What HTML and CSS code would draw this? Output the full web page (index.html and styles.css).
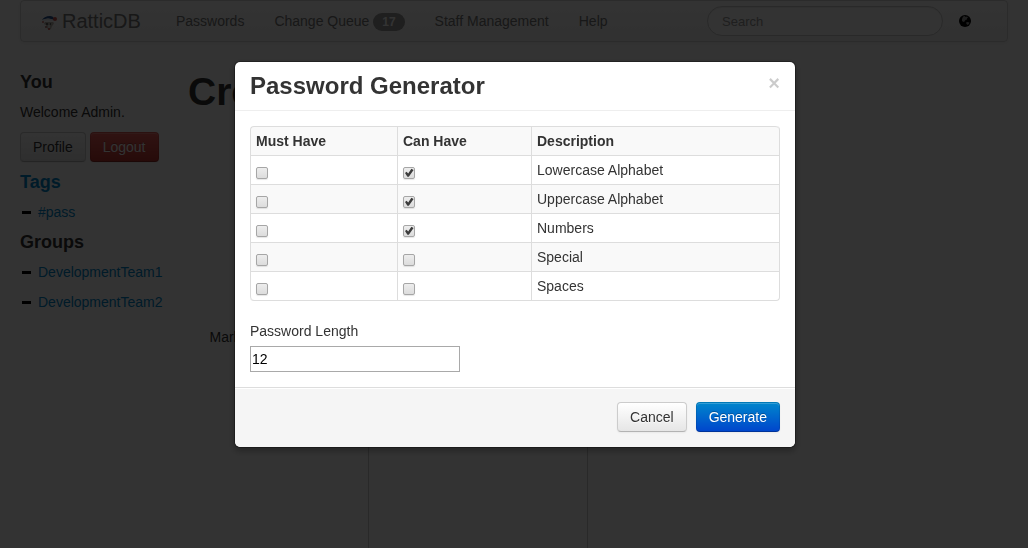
FILE: index.html
```html
<!DOCTYPE html>
<html lang="en">
<head>
<meta charset="utf-8">
<meta name="viewport" content="width=device-width, initial-scale=1">
<title>RatticDB</title>
<link rel="stylesheet" href="styles.css">
</head>
<body>
<div class="page">
  <nav class="navbar">
    <a class="brand" href="#">
      <svg class="logo" viewBox="0 0 16 16" aria-hidden="true">
        <path d="M4 7h8l1 1-1 2-1 1-1 3-2 1-2-2-1-3-2-1z" fill="#b9b2a9"/>
        <path d="M5 8h2v2H5zM9 8h1v2H9z" fill="#666"/>
        <path d="M7 10h2v3H7z" fill="#ddd"/>
        <path d="M1 5c1-2 4-4 8-4 2 0 4 1 4 3v1C9 3 5 3 1 5z" fill="#26508f"/>
        <path d="M1 5c4-2 8-2 12 0v1C9 5 5 5 2 6z" fill="#e4e9f0"/>
        <circle cx="14" cy="4" r="2" fill="#c9504a"/>
        <circle cx="2" cy="7" r="1" fill="#c9706a"/>
        <circle cx="8" cy="14" r="1" fill="#c9504a"/>
        <circle cx="5" cy="12" r="1" fill="#a56a64"/>
      </svg>
      <span>RatticDB</span>
    </a>
    <ul class="nav">
      <li><a href="#">Passwords</a></li>
      <li><a href="#">Change Queue <span class="badge">17</span></a></li>
      <li><a href="#">Staff Management</a></li>
      <li><a href="#">Help</a></li>
    </ul>
    <input class="search" type="search" placeholder="Search" aria-label="Search">
    <a class="globe" href="#" aria-label="Language">
      <svg viewBox="0 0 14 14" aria-hidden="true">
        <circle cx="7" cy="7" r="6" fill="#000"/>
        <path d="M5 2.500 7 2 7.500 3 9 2.500 10 3.500 9 4.500 9 5.500 7.500 6 6.500 7.500 5.500 8 4 7 4 5z" fill="#999"/>
        <path d="M8 8.500 9.500 8 11.500 8.500 11 10 9.500 11 8.500 10z" fill="#999"/>
      </svg>
    </a>
  </nav>
  <div class="columns">
    <aside class="sidebar">
      <h4>You</h4>
      <p>Welcome Admin.</p>
      <div class="account">
        <button class="btn" type="button">Profile</button>
        <button class="btn danger" type="button">Logout</button>
      </div>
      <h4><a href="#">Tags</a></h4>
      <ul class="list">
        <li><span class="minus"></span><a href="#">#pass</a></li>
      </ul>
      <h4>Groups</h4>
      <ul class="list">
        <li><span class="minus"></span><a href="#">DevelopmentTeam1</a></li>
        <li><span class="minus"></span><a href="#">DevelopmentTeam2</a></li>
      </ul>
    </aside>
    <main class="content">
      <h1>Create</h1>
      <div class="field">
        <label for="notes">Markdown Description</label>
        <textarea id="notes"></textarea>
      </div>
    </main>
  </div>
</div>
<div class="backdrop"></div>
<form class="modal" role="dialog" aria-labelledby="modal-title">
  <header class="modal-header">
    <h3 id="modal-title">Password Generator</h3>
    <button class="close" type="button" aria-label="Close">×</button>
  </header>
  <div class="modal-body">
    <table class="rules">
      <colgroup><col class="must"><col class="can"><col></colgroup>
      <thead>
        <tr><th>Must Have</th><th>Can Have</th><th>Description</th></tr>
      </thead>
      <tbody>
        <tr><td><input type="checkbox" aria-label="Must have lowercase alphabet"></td><td><input type="checkbox" aria-label="Can have lowercase alphabet" checked></td><td>Lowercase Alphabet</td></tr>
        <tr><td><input type="checkbox" aria-label="Must have uppercase alphabet"></td><td><input type="checkbox" aria-label="Can have uppercase alphabet" checked></td><td>Uppercase Alphabet</td></tr>
        <tr><td><input type="checkbox" aria-label="Must have numbers"></td><td><input type="checkbox" aria-label="Can have numbers" checked></td><td>Numbers</td></tr>
        <tr><td><input type="checkbox" aria-label="Must have special"></td><td><input type="checkbox" aria-label="Can have special"></td><td>Special</td></tr>
        <tr><td><input type="checkbox" aria-label="Must have spaces"></td><td><input type="checkbox" aria-label="Can have spaces"></td><td>Spaces</td></tr>
      </tbody>
    </table>
    <label class="length-label" for="length">Password Length</label>
    <input class="length" id="length" type="text" value="12">
  </div>
  <footer class="modal-footer">
    <button class="btn" type="button">Cancel</button>
    <button class="btn primary" type="button">Generate</button>
  </footer>
</form>
</body>
</html>
```
FILE: styles.css
```css
* { box-sizing: border-box; }

body {
  margin: 0;
  overflow: hidden;
  background: #fff;
  color: #333;
  font: 14px/20px "Liberation Sans", Arial, sans-serif;
}

h1, h3, h4, p, ul { margin: 0; padding: 0; }
ul { list-style: none; }
a { color: #08c; text-decoration: none; }
button, input, textarea { font-family: inherit; }

.page {
  height: 100vh;
  padding: 0 20px;
  overflow: hidden;
}

.navbar {
  display: flex;
  align-items: center;
  padding: 0 20px;
  border: 1px solid #d4d4d4;
  border-radius: 4px;
  background: linear-gradient(#fff, #f2f2f2);
  box-shadow: 0 1px 4px rgba(0, 0, 0, 0.07);
}

.brand {
  display: flex;
  align-items: center;
  gap: 5px;
  padding: 10px 20px 10px 0;
  color: #777;
  font-size: 20px;
}

.logo { width: 16px; height: 16px; margin-top: 3px; }

.nav { display: flex; flex: 1; }
.nav a { display: block; padding: 10px 15px; color: #777; }

.badge {
  display: inline-block;
  padding: 2px 9px;
  border-radius: 9px;
  background: #999;
  color: #fff;
  font-size: 12px;
  font-weight: bold;
  line-height: 14px;
  vertical-align: baseline;
}

.search {
  appearance: none;
  width: 236px;
  height: 30px;
  padding: 4px 14px;
  border: 1px solid #ccc;
  border-radius: 15px;
  background: #fff;
  font-size: 13px;
  box-shadow: inset 0 1px 1px rgba(0, 0, 0, 0.08);
}
.search::placeholder { color: #999; }

.globe { display: flex; padding: 0 15px; }
.globe svg { width: 14px; height: 14px; }

.columns {
  display: grid;
  grid-template-columns: 148px 1fr;
  gap: 20px;
  padding-top: 30px;
}

.sidebar, .list { display: flex; flex-direction: column; gap: 10px; }

h4 { color: #333; font-size: 18px; line-height: 20px; }

.account { display: flex; gap: 4px; }

.list li { display: flex; align-items: center; gap: 7px; padding-left: 2px; }
.minus { width: 9px; height: 3px; background: #000; }

h1 { font-size: 39px; line-height: 40px; }

.field {
  display: grid;
  grid-template-columns: 160px 220px;
  gap: 20px;
  margin-top: 210px;
}
.field label { padding-top: 5px; text-align: right; }
.field textarea { height: 320px; border: 1px solid #ccc; resize: none; }

.btn {
  padding: 4px 12px;
  border: 1px solid #ccc;
  border-bottom-color: #b3b3b3;
  border-radius: 4px;
  background: linear-gradient(#fff, #e6e6e6);
  box-shadow: inset 0 1px 0 rgba(255, 255, 255, 0.2), 0 1px 2px rgba(0, 0, 0, 0.05);
  color: #333;
  font-size: 14px;
  line-height: 20px;
  text-shadow: 0 1px 1px rgba(255, 255, 255, 0.75);
}

.danger, .primary {
  border-color: rgba(0, 0, 0, 0.1) rgba(0, 0, 0, 0.1) rgba(0, 0, 0, 0.25);
  background-origin: border-box;
  color: #fff;
  text-shadow: 0 -1px 0 rgba(0, 0, 0, 0.25);
}
.danger { background-image: linear-gradient(#ee5f5b, #bd362f); }
.primary { background-image: linear-gradient(#08c, #04c); }

.backdrop {
  position: fixed;
  inset: 0;
  background: #000;
  opacity: 0.8;
}

.modal {
  position: fixed;
  top: 61px;
  left: 50%;
  width: 562px;
  margin-left: -280px;
  border: 1px solid rgba(0, 0, 0, 0.3);
  border-radius: 6px;
  background: #fff;
  background-clip: padding-box;
  box-shadow: 0 3px 7px rgba(0, 0, 0, 0.3);
}

.modal-header {
  display: flex;
  justify-content: space-between;
  align-items: flex-start;
  padding: 9px 15px;
  border-bottom: 1px solid #eee;
}
.modal-header h3 { font-size: 24px; line-height: 30px; }

.close {
  padding: 0;
  margin-top: 2px;
  border: 0;
  background: none;
  color: #000;
  font-size: 20px;
  font-weight: bold;
  line-height: 20px;
  opacity: 0.2;
}

.modal-body { padding: 15px; }

.rules {
  width: 100%;
  table-layout: fixed;
  margin-bottom: 20px;
  border: 1px solid #ddd;
  border-width: 0 1px 1px 0;
  border-radius: 4px;
  border-spacing: 0;
}
.must { width: 147px; }
.can { width: 134px; }
.rules th, .rules td {
  padding: 4px 5px;
  border: 1px solid #ddd;
  border-width: 1px 0 0 1px;
  text-align: left;
  vertical-align: top;
}
.rules thead th, .rules tbody tr:nth-child(even) td { background: #f9f9f9; }
.rules th:first-child { border-top-left-radius: 4px; }
.rules th:last-child { border-top-right-radius: 4px; }
.rules tbody tr:last-child td:first-child { border-bottom-left-radius: 4px; }

.rules input {
  appearance: none;
  display: block;
  width: 12px;
  height: 12px;
  margin: 7px 0 0;
  border: 1px solid #a6a6a6;
  border-radius: 2px;
  background: linear-gradient(#ededed, #dcdcdc);
  box-shadow: 0 1px 1px rgba(0, 0, 0, 0.1);
}
.rules input:checked::before {
  content: "";
  display: block;
  height: 10px;
  background: #3c3c3c;
  clip-path: polygon(10% 50%, 26% 38%, 42% 56%, 74% 8%, 96% 20%, 48% 88%, 34% 88%);
}

.length-label { display: block; margin-bottom: 5px; }
.length {
  display: block;
  width: 210px;
  height: 26px;
  padding: 1px;
  border: 1px solid #a9a9a9;
  color: #000;
  font-size: 14px;
}

.modal-footer {
  display: flex;
  justify-content: flex-end;
  gap: 9px;
  padding: 14px 15px 15px;
  border-top: 1px solid #ddd;
  border-radius: 0 0 6px 6px;
  background: #f5f5f5;
  box-shadow: inset 0 1px 0 #fff;
}
```
